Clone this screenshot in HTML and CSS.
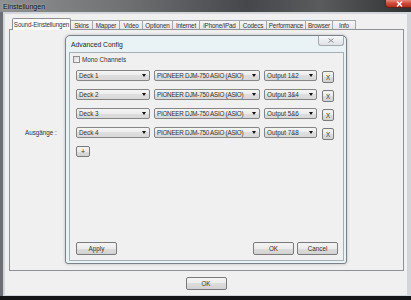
FILE: index.html
```html
<!DOCTYPE html>
<html lang="de">
<head>
  <meta charset="UTF-8" />
  <title>Einstellungen</title>
  <link rel="stylesheet" href="styles.css">
</head>
<body>
  <div class="window">
    <div class="titlebar">
      <span class="title">Einstellungen</span>
      <span class="win-close">
        <svg width="7" height="6" viewBox="0 0 7 6"><path d="M1 0.5 L6 5.5 M6 0.5 L1 5.5" stroke="#fff" stroke-width="1.4"/></svg>
      </span>
    </div>
    <div class="frame">
      <div class="client">
        <div class="tabs">
          <div class="tab active">Sound-Einstellungen</div>
          <div class="tab">Skins</div>
          <div class="tab">Mapper</div>
          <div class="tab">Video</div>
          <div class="tab">Optionen</div>
          <div class="tab">Internet</div>
          <div class="tab">iPhone/iPad</div>
          <div class="tab">Codecs</div>
          <div class="tab">Performance</div>
          <div class="tab">Browser</div>
          <div class="tab">Info</div>
        </div>

        <div class="panel">
          <div class="field-label">Ausgänge :</div>

          <div class="dialog">
            <div class="dialog-title">Advanced Config</div>
            <span class="dialog-close">
              <svg width="6" height="5" viewBox="0 0 6 5"><path d="M0.5 0.5 L5.5 4.5 M5.5 0.5 L0.5 4.5" stroke="#8c8c8c" stroke-width="1"/></svg>
            </span>
            <div class="dialog-body">
              <label class="check"><span class="box"></span>Mono Channels</label>

              <div class="rows">
                <div class="row">
                  <div class="combo deck"><span>Deck 1</span><i class="arrow"></i></div>
                  <div class="combo device"><span>PIONEER DJM-750 ASIO (ASIO)</span><i class="arrow"></i></div>
                  <div class="combo output"><span>Output 1&amp;2</span><i class="arrow"></i></div>
                  <button class="btn remove">X</button>
                </div>
                <div class="row">
                  <div class="combo deck"><span>Deck 2</span><i class="arrow"></i></div>
                  <div class="combo device"><span>PIONEER DJM-750 ASIO (ASIO)</span><i class="arrow"></i></div>
                  <div class="combo output"><span>Output 3&amp;4</span><i class="arrow"></i></div>
                  <button class="btn remove">X</button>
                </div>
                <div class="row">
                  <div class="combo deck"><span>Deck 3</span><i class="arrow"></i></div>
                  <div class="combo device"><span>PIONEER DJM-750 ASIO (ASIO)</span><i class="arrow"></i></div>
                  <div class="combo output"><span>Output 5&amp;6</span><i class="arrow"></i></div>
                  <button class="btn remove">X</button>
                </div>
                <div class="row">
                  <div class="combo deck"><span>Deck 4</span><i class="arrow"></i></div>
                  <div class="combo device"><span>PIONEER DJM-750 ASIO (ASIO)</span><i class="arrow"></i></div>
                  <div class="combo output"><span>Output 7&amp;8</span><i class="arrow"></i></div>
                  <button class="btn remove">X</button>
                </div>
              </div>

              <button class="btn add">+</button>

              <div class="dialog-actions">
                <button class="btn wide">Apply</button>
                <div class="right-actions">
                  <button class="btn wide">OK</button>
                  <button class="btn wide">Cancel</button>
                </div>
              </div>
            </div>
          </div>
        </div>

        <div class="footer">
          <button class="btn wide">OK</button>
        </div>
      </div>
    </div>
  </div>
  <div class="taskbar"></div>
</body>
</html>
```

FILE: styles.css
```css
* {
  box-sizing: border-box;
}

body {
  margin: 0;
  width: 411px;
  height: 300px;
  overflow: hidden;
  background: #151617;
  font-family: "Liberation Sans", Arial, sans-serif;
  font-size: 6.3px;
  color: #333;
}

.window {
  height: 296px;
  display: flex;
  flex-direction: column;
  background: #d2d6da;
}

/* title bar */

.titlebar {
  height: 12px;
  position: relative;
  display: flex;
  align-items: center;
  background: linear-gradient(90deg, #8e9092 0%, #6f7173 30%, #45474a 60%, #5a5b5d 78%, #303133 100%);
}

.titlebar .title {
  padding-left: 3px;
  font-size: 7px;
  color: #121212;
  text-shadow: 0 0 3px rgba(255, 255, 255, 0.6);
}

.win-close {
  position: absolute;
  top: 0;
  right: -3px;
  width: 29px;
  height: 8px;
  display: flex;
  align-items: center;
  justify-content: center;
  background: linear-gradient(#e38a7c, #cc4a37 50%, #b3301f);
  border: 1px solid #5e231b;
  border-top: 0;
  border-radius: 0 0 4px 4px;
}

/* window frame + client area */

.frame {
  flex: 1;
  display: flex;
  padding: 2px 4px 1px 2px;
  border-left: 3px solid #6a6f76;
}

.client {
  flex: 1;
  display: flex;
  flex-direction: column;
  background: #f0f0f0;
}

/* tabs */

.tabs {
  display: grid;
  grid-template-columns: 59px 22px 27px 23px 30px 27px 40px 27px 39px 27px 23px;
  justify-content: start;
  align-items: end;
  height: 12px;
  margin: 4px 0 0 7px;
}

.tab {
  height: 10px;
  display: flex;
  align-items: center;
  justify-content: center;
  white-space: nowrap;
  letter-spacing: -0.15px;
  background: linear-gradient(#f6f6f6, #e4e4e4);
  border-top: 1px solid #a3a7ac;
  border-right: 1px solid #a3a7ac;
  padding-bottom: 1px;
}

.tab.active {
  position: relative;
  z-index: 1;
  height: 12px;
  background: #fff;
  border: 1px solid #8c9096;
  border-bottom: 0;
  border-radius: 2px 2px 0 0;
}

.panel {
  position: relative;
  height: 242px;
  margin: -1px 3px 0 4px;
  border: 1px solid #8e9196;
  background: #f0f0f0;
}

.field-label {
  margin: 99px 0 0 15px;
}

/* dialog window */

.dialog {
  position: absolute;
  left: 55px;
  top: 5px;
  width: 282px;
  height: 229px;
  display: flex;
  flex-direction: column;
  background: #e9f3f6;
  border: 1px solid #7a838b;
  border-radius: 5px 5px 3px 3px;
  box-shadow: 0 0 3px rgba(0, 0, 0, 0.25);
}

.dialog-title {
  height: 16px;
  padding-left: 5px;
  display: flex;
  align-items: center;
  font-size: 6.8px;
  color: #1e1e1e;
}

.dialog-close {
  position: absolute;
  top: 0;
  right: 2px;
  width: 26px;
  height: 10px;
  display: flex;
  align-items: center;
  justify-content: center;
  background: linear-gradient(#f7f8f9, #dfe3e6);
  border: 1px solid #a3a9ae;
  border-top: 0;
  border-radius: 0 0 3px 3px;
}

.dialog-body {
  flex: 1;
  display: flex;
  flex-direction: column;
  margin: 0 2px 2px 3px;
  padding: 3px 5px 5px 6px;
  background: #f0f0f0;
  border: 1px solid #a7afb6;
}

.check {
  display: flex;
  align-items: center;
  gap: 2px;
  margin-left: -3px;
  height: 7px;
}

.check .box {
  width: 7px;
  height: 7px;
  border: 1px solid #8e8f8f;
  background: linear-gradient(135deg, #d9d9d9, #fbfbfb);
}

.rows {
  display: flex;
  flex-direction: column;
  gap: 6px;
  margin-top: 7px;
}

.row {
  display: flex;
  align-items: flex-start;
}

.combo {
  height: 11px;
  display: flex;
  align-items: center;
  justify-content: space-between;
  padding: 0 3px 0 2px;
  margin-right: 4px;
  white-space: nowrap;
  background: linear-gradient(#f5f5f5, #ebebeb 50%, #dedede 50%, #d8d8d8);
  border: 1px solid #858585;
  border-radius: 2px;
}

.combo.deck {
  width: 74px;
}

.combo.device {
  width: 106px;
  letter-spacing: -0.25px;
}

.combo.output {
  width: 53px;
  margin-right: 5px;
}

.arrow {
  width: 0;
  height: 0;
  border-left: 2.5px solid transparent;
  border-right: 2.5px solid transparent;
  border-top: 3px solid #111;
}

.btn {
  font-family: inherit;
  font-size: 6.3px;
  color: #333;
  padding: 0;
  background: linear-gradient(#f4f4f4, #ebebeb 50%, #dddddd 50%, #d2d2d2);
  border: 1px solid #7a7a7a;
  border-radius: 2px;
}

.btn.remove {
  width: 12px;
  height: 12px;
  margin-top: 1px;
}

.btn.add {
  align-self: flex-start;
  width: 14px;
  height: 11px;
  margin-top: 6px;
  font-size: 7px;
}

.btn.wide {
  width: 41px;
  height: 13px;
}

.dialog-actions {
  margin-top: auto;
  display: flex;
  justify-content: space-between;
}

.right-actions {
  display: flex;
  gap: 3px;
}

.footer {
  display: flex;
  justify-content: center;
  padding-top: 6px;
}

.taskbar {
  height: 4px;
  background: #141516;
}
```
